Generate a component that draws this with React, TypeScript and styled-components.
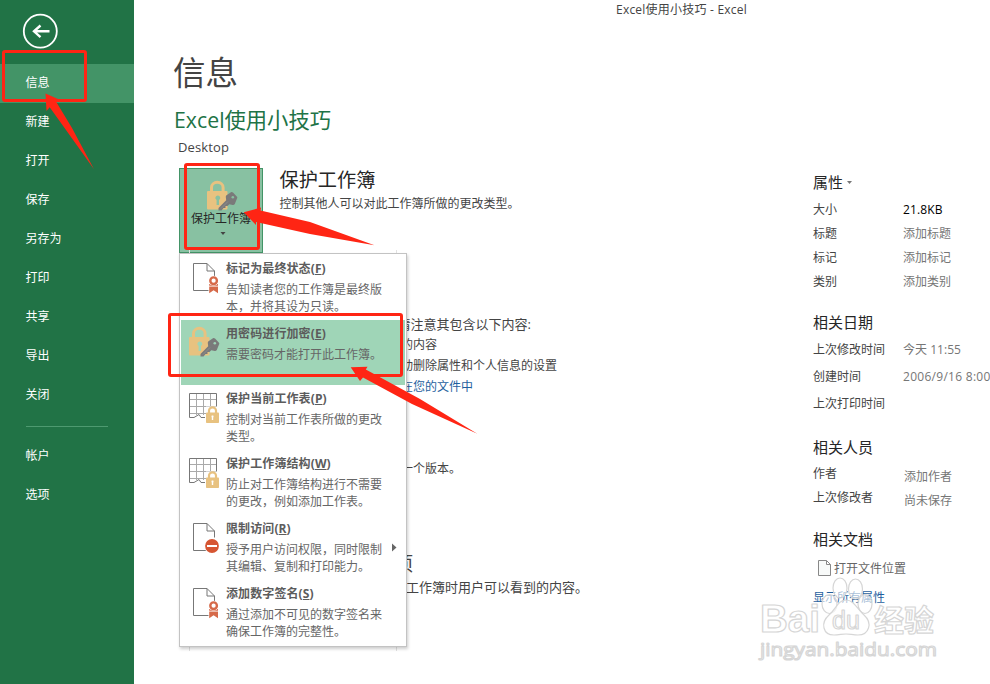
import React from "react";
import styled, { createGlobalStyle } from "styled-components";

const GlobalStyle = createGlobalStyle`
  * { box-sizing: border-box; }
  body {
    margin: 0;
    background: #fff;
    color: #444;
    font-family: "Open Sans", "Noto Sans CJK SC", sans-serif;
    font-size: 12px;
    overflow: hidden;
  }
`;

const Window = styled.div`
  position: relative;
  display: flex;
  width: 990px;
  height: 684px;
  overflow: hidden;
  white-space: nowrap;
`;

const Sidebar = styled.nav`
  width: 134px;
  height: 684px;
  background: #217346;
  color: #fff;
`;

const BackButton = styled.div`
  height: 64px;
  padding: 13px 0 0 22px;
`;

const NavItem = styled.div<{ $active?: boolean }>`
  height: 39px;
  line-height: 38px;
  padding-left: 25.5px;
  background: ${(p) => (p.$active ? "#439467" : "transparent")};
`;

const NavDivider = styled.div`
  height: 1px;
  width: 82px;
  margin: 11px 0 10px 26px;
  background: #4e9a70;
`;

const Main = styled.main`
  flex: 1;
  display: flex;
  flex-direction: column;
`;

const TitleBar = styled.header`
  height: 20px;
  line-height: 20px;
  padding-left: 482px;
  letter-spacing: 0.22px;
`;

const Columns = styled.div`
  display: flex;
`;

const InfoColumn = styled.section`
  width: 679px;
  padding-left: 40px;
`;

const PageTitle = styled.h1`
  margin: 31px 0 0 -1px;
  height: 44px;
  font-size: 32.5px;
  font-weight: 400;
  line-height: 44px;
`;

const FileTitle = styled.h2`
  margin: 10px 0 0;
  height: 30px;
  font-size: 21.3px;
  font-weight: 400;
  line-height: 30px;
  color: #217346;
`;

const FilePath = styled.div`
  height: 20px;
  margin-top: 2px;
  padding-left: 4px;
  font-size: 13px;
  line-height: 20px;
  letter-spacing: 0.12px;
`;

const ProtectRow = styled.div`
  display: flex;
  margin: 11px 0 0 5px;
`;

const ProtectButton = styled.div`
  position: relative;
  width: 84px;
  height: 85px;
  border: 1px solid #439467;
  background: #88c1a2;
  color: #262626;
  display: flex;
  flex-direction: column;
  align-items: center;
  svg { display: block; }
`;

const ProtectLabel = styled.div`
  margin-top: -4px;
  height: 18px;
  line-height: 18px;
`;

const ProtectArrow = styled.svg`
  margin-left: 3px;
`;

const ProtectText = styled.div`
  padding-left: 16.5px;
`;

const SectionTitle = styled.div`
  height: 24px;
  line-height: 24px;
  font-size: 19.2px;
  color: #262626;
`;

const SectionText = styled.div`
  height: 20px;
  margin-top: 1px;
  line-height: 21px;
`;

const Fragment = styled.div<{ $end: number; $gap: number; $size?: number; $link?: boolean }>`
  width: ${(p) => p.$end - 174}px;
  margin-top: ${(p) => p.$gap}px;
  height: 20px;
  line-height: 20px;
  text-align: right;
  font-size: ${(p) => p.$size ?? 12}px;
  color: ${(p) => (p.$link ? "#1f5f9e" : "#444")};
`;

const Properties = styled.aside`
  width: 177px;
  padding-top: 152px;
`;

const GroupTitle = styled.div<{ $gap?: number; $after: number }>`
  display: flex;
  align-items: center;
  gap: 4px;
  height: 20px;
  margin: ${(p) => p.$gap ?? 0}px 0 ${(p) => p.$after}px;
  line-height: 20px;
  font-size: 15px;
  color: #262626;
`;

const PropertyRow = styled.div<{ $height: number; $drop?: number }>`
  display: grid;
  grid-template-columns: 90px 1fr;
  height: ${(p) => p.$height}px;
  line-height: ${(p) => p.$height}px;
  span + span {
    color: #767676;
    padding: ${(p) => p.$drop ?? 0}px 0 0 ${(p) => (p.$drop && p.$drop > 1 ? 1 : 0)}px;
    letter-spacing: 0.03px;
  }
  span + span.strong { color: #000; letter-spacing: 0.15px; }
  span + span.date { letter-spacing: 0.28px; }
`;

const FileLocation = styled.div`
  display: flex;
  align-items: center;
  gap: 3px;
  height: 20px;
  padding-left: 5px;
  color: #666;
`;

const PropertyLink = styled.div`
  margin-top: 10px;
  height: 20px;
  line-height: 20px;
  color: #1f5f9e;
`;

const PanelEdge = styled.div`
  position: absolute;
  left: 189px;
  top: 250px;
  width: 208px;
  height: 401px;
  border: solid #e2e2e2;
  border-width: 0 1px;
`;

const Menu = styled.div`
  position: absolute;
  left: 179px;
  top: 253px;
  width: 228px;
  height: 394px;
  padding: 1px;
  border: 1px solid #c3c3c3;
  background: #fff;
  box-shadow: 1px 2px 3px rgba(0, 0, 0, 0.2);
`;

const MenuItem = styled.div<{ $active?: boolean }>`
  display: grid;
  grid-template-columns: 45px 1fr 18px;
  width: 224px;
  height: 65px;
  align-items: start;
  background: ${(p) => (p.$active ? "#9fd5b7" : "transparent")};
  svg { display: block; }
`;

const MenuTitle = styled.div`
  height: 20px;
  margin-top: 4px;
  line-height: 20px;
  font-weight: 700;
  color: #5c5c5c;
  letter-spacing: 0.1px;
  u { text-underline-offset: 1px; }
`;

const MenuText = styled.div`
  margin-top: 2px;
  line-height: 17px;
  color: #666;
`;

const SubmenuArrow = styled.svg`
  margin: 28px 0 0 4px;
`;

const Overlay = styled.svg`
  position: absolute;
  left: 0;
  top: 0;
  pointer-events: none;
`;

function LockAndKey({ shade }: { shade: string }) {
  return (
    <svg width="45" height="45" viewBox="0 0 45 45" fill="none">
      <path d="M12.5 18V13.5a5.800 5.200 0 0 1 11.600 0V18" stroke="#e8c280" strokeWidth="3" />
      <rect x="8" y="17" width="20.5" height="18.5" rx="1" fill="#e8c280" />
      <path d="M18.800 21.500a2.400 2.400 0 0 0-1.200 4.500v5h2.400v-5a2.400 2.400 0 0 0-1.200-4.500z" fill={shade} />
      <path
        d="M32 18.200Q33 17.800 34 18.600L38 22.800Q38.700 23.800 38 24.600L35.800 30Q35 31.200 33.800 31L30.300 30.300L28.500 32H26.500V34H24.500L22.500 36.500H19.500V34L27.200 26.200L26.800 23Q26.700 22 27.500 21.200Z"
        fill="#7a7a7a"
      />
      <path d="M22 34.500L29 27.500" stroke="#949494" strokeWidth=".7" />
      <circle cx="33.800" cy="23.200" r="1.300" fill={shade} />
    </svg>
  );
}

function PageShape() {
  return (
    <path
      d="M27.500 35.500H12.500V8.500H26L33.500 16V22.500M26 8.500V16H33.500"
      stroke="#777"
      fill="none"
    />
  );
}

function SealedPage() {
  return (
    <svg width="45" height="45" viewBox="0 0 45 45">
      <PageShape />
      <path d="M28.200 29h8.800v9.300l-4.400-3-4.400 3z" fill="#d66a4a" />
      <circle cx="32.600" cy="25.700" r="4.900" fill="#fff" />
      <circle cx="32.600" cy="25.700" r="3.300" fill="#fff" stroke="#d66a4a" strokeWidth="2.400" />
      <path d="M28 31.200h9" stroke="#fff" strokeWidth=".8" />
    </svg>
  );
}

function RestrictedPage() {
  return (
    <svg width="45" height="45" viewBox="0 0 45 45">
      <PageShape />
      <circle cx="31" cy="31" r="7.800" fill="#fff" />
      <circle cx="31" cy="31" r="6.900" fill="#d65532" />
      <path d="M26 31h10" stroke="#fff" strokeWidth="2" />
    </svg>
  );
}

function LockedGrid() {
  return (
    <svg width="45" height="45" viewBox="0 0 45 45" fill="none">
      <path d="M15.500 8v22M22.500 8v22M29.500 8v16M8 14.500h28M8 21.500h28M8 28.500h17" stroke="#aaa" />
      <path d="M35.500 23V8.500H8.500V32.500H13L18 29.500L20 32.500H24" stroke="#777" />
      <path d="M25 21.500h12v8H25z" fill="#fff" />
      <path d="M28 28v-2.500a3.500 3.200 0 0 1 7 0V28" stroke="#e8c280" strokeWidth="2.200" />
      <rect x="25" y="27.500" width="13" height="10.500" rx=".8" fill="#e8c280" />
      <path d="M31.500 30.500v4.500M30.500 31.500h2" stroke="#fff" strokeWidth="1.400" />
    </svg>
  );
}

const navItems = ["信息", "新建", "打开", "保存", "另存为", "打印", "共享", "导出", "关闭"];

const menuItems = [
  { icon: <SealedPage />, title: "标记为最终状态", key: "F", lines: ["告知读者您的工作簿是最终版", "本，并将其设为只读。"] },
  { icon: <LockAndKey shade="#9fd5b7" />, title: "用密码进行加密", key: "E", lines: ["需要密码才能打开此工作簿。"], active: true },
  { icon: <LockedGrid />, title: "保护当前工作表", key: "P", lines: ["控制对当前工作表所做的更改", "类型。"] },
  { icon: <LockedGrid />, title: "保护工作簿结构", key: "W", lines: ["防止对工作簿结构进行不需要", "的更改，例如添加工作表。"] },
  { icon: <RestrictedPage />, title: "限制访问", key: "R", lines: ["授予用户访问权限，同时限制", "其编辑、复制和打印能力。"], submenu: true },
  { icon: <SealedPage />, title: "添加数字签名", key: "S", lines: ["通过添加不可见的数字签名来", "确保工作簿的完整性。"] },
];

function Watermark() {
  return (
    <g fill="#fff" fillOpacity=".6" stroke="#d6d6d6" strokeWidth="1.200" strokeLinejoin="round" fontFamily="Liberation Sans, Noto Sans CJK SC, sans-serif">
      <text x="760" y="632" fontSize="38" fontWeight="700" textLength="60" lengthAdjust="spacingAndGlyphs">Bai</text>
      <ellipse cx="829.500" cy="604" rx="7.500" ry="9.500" />
      <ellipse cx="840" cy="588" rx="7" ry="10" />
      <ellipse cx="855.500" cy="589" rx="7" ry="10" />
      <ellipse cx="865" cy="604" rx="7" ry="9.500" />
      <path d="M846 600c8 0 11 9 18 15 9 8 5 20-6 20-5 0-8-1-12-1s-7 1-12 1c-11 0-14-12-5-20 7-6 9-15 17-15z" />
      <text x="832" y="629" fontSize="25" textLength="28">du</text>
      <text x="874" y="631" fontSize="30" fontWeight="700" textLength="60">经验</text>
      <text x="760" y="656" fontSize="19" fontFamily="Open Sans, sans-serif" textLength="177" lengthAdjust="spacingAndGlyphs">jingyan.baidu.com</text>
    </g>
  );
}

function Annotations() {
  return (
    <>
      <g fill="none" stroke="#ff2514" strokeWidth="3">
        <rect x="3.500" y="51.500" width="82" height="49" rx="1.500" />
        <rect x="185.500" y="164.500" width="73" height="84" rx="1.500" />
        <rect x="169.500" y="314.500" width="232" height="61" rx="1.500" />
      </g>
      <g fill="#ff2514">
        <path d="M45.500 93.500L58 99l-2 2.500L72 128l22 41.300L66 130 49.700 107.300 46.500 111z" />
        <path d="M243.700 212.300L261 207.500l-.5 3L310 222l64.500 23.300L310 234l-54-12 0 3z" />
        <path d="M350.700 367.300l16.800-.6-1.700 2.800L420 399l57.300 34.700L412 404l-49-26.500L360 381z" />
      </g>
    </>
  );
}

export default function App() {
  return (
    <Window>
      <GlobalStyle />
      <Sidebar>
        <BackButton>
          <svg width="36" height="36" viewBox="0 0 36 36" fill="none" stroke="#fff">
            <circle cx="18.300" cy="18.200" r="16.500" strokeWidth="1.800" />
            <path d="M27.500 18.300H12M18.500 12.500l-6.500 5.800 6.500 5.800" strokeWidth="2.400" />
          </svg>
        </BackButton>
        {navItems.map((name, i) => (
          <NavItem key={name} $active={i === 0}>{name}</NavItem>
        ))}
        <NavDivider />
        <NavItem>帐户</NavItem>
        <NavItem>选项</NavItem>
      </Sidebar>
      <Main>
        <TitleBar>Excel使用小技巧 - Excel</TitleBar>
        <Columns>
          <InfoColumn>
            <PageTitle>信息</PageTitle>
            <FileTitle>Excel使用小技巧</FileTitle>
            <FilePath>Desktop</FilePath>
            <ProtectRow>
              <ProtectButton>
                <svg width="45" height="45" viewBox="0 -5 45 45"><LockAndKey shade="#88c1a2" /></svg>
                <ProtectLabel>保护工作簿</ProtectLabel>
                <ProtectArrow width="6" height="10" viewBox="0 0 6 10"><path d="M.5 4h5L3 7z" fill="#444" /></ProtectArrow>
              </ProtectButton>
              <ProtectText>
                <SectionTitle>保护工作簿</SectionTitle>
                <SectionText>控制其他人可以对此工作簿所做的更改类型。</SectionText>
              </ProtectText>
            </ProtectRow>
            <Fragment $end={531} $gap={61} $size={13}>请注意其包含以下内容:</Fragment>
            <Fragment $end={437} $gap={1}>的内容</Fragment>
            <Fragment $end={557} $gap={1}>动删除属性和个人信息的设置</Fragment>
            <Fragment $end={473} $gap={1} $link>在您的文件中</Fragment>
            <Fragment $end={461} $gap={62}>一个版本。</Fragment>
            <Fragment $end={413} $gap={75} $size={19}>项</Fragment>
            <Fragment $end={588} $gap={3} $size={13}>工作簿时用户可以看到的内容。</Fragment>
          </InfoColumn>
          <Properties>
            <GroupTitle $after={6}>
              属性
              <svg width="5" height="3" viewBox="0 0 5 3"><path d="M0 0h5L2.500 3z" fill="#777" /></svg>
            </GroupTitle>
            <PropertyRow $height={24}><span>大小</span><span className="strong">21.8KB</span></PropertyRow>
            <PropertyRow $height={24}><span>标题</span><span>添加标题</span></PropertyRow>
            <PropertyRow $height={24}><span>标记</span><span>添加标记</span></PropertyRow>
            <PropertyRow $height={24}><span>类别</span><span>添加类别</span></PropertyRow>
            <GroupTitle $gap={18} $after={4}>相关日期</GroupTitle>
            <PropertyRow $height={27}><span>上次修改时间</span><span>今天 11:55</span></PropertyRow>
            <PropertyRow $height={27}><span>创建时间</span><span className="date">2006/9/16 8:00</span></PropertyRow>
            <PropertyRow $height={27}><span>上次打印时间</span></PropertyRow>
            <GroupTitle $gap={20} $after={5}>相关人员</GroupTitle>
            <PropertyRow $height={24} $drop={3}><span>作者</span><span>添加作者</span></PropertyRow>
            <PropertyRow $height={24} $drop={3}><span>上次修改者</span><span>尚未保存</span></PropertyRow>
            <GroupTitle $gap={19} $after={9}>相关文档</GroupTitle>
            <FileLocation>
              <svg width="13" height="16" viewBox="0 0 13 16"><path d="M.5.5h8l4 4v11H.5zM8.500.5v4h4" fill="#f8faf9" stroke="#888" /></svg>
              打开文件位置
            </FileLocation>
            <PropertyLink>显示所有属性</PropertyLink>
          </Properties>
        </Columns>
      </Main>
      <PanelEdge />
      <Menu>
        {menuItems.map((item) => (
          <MenuItem key={item.key} $active={item.active}>
            {item.icon}
            <div>
              <MenuTitle>{item.title}(<u>{item.key}</u>)</MenuTitle>
              <MenuText>{item.lines.map((line) => <div key={line}>{line}</div>)}</MenuText>
            </div>
            {item.submenu && (
              <SubmenuArrow width="6" height="9" viewBox="0 0 6 9"><path d="M1 0.500v8l4.500-4z" fill="#666" /></SubmenuArrow>
            )}
          </MenuItem>
        ))}
      </Menu>
      <Overlay width="990" height="684" viewBox="0 0 990 684">
        <Watermark />
        <Annotations />
      </Overlay>
    </Window>
  );
}
